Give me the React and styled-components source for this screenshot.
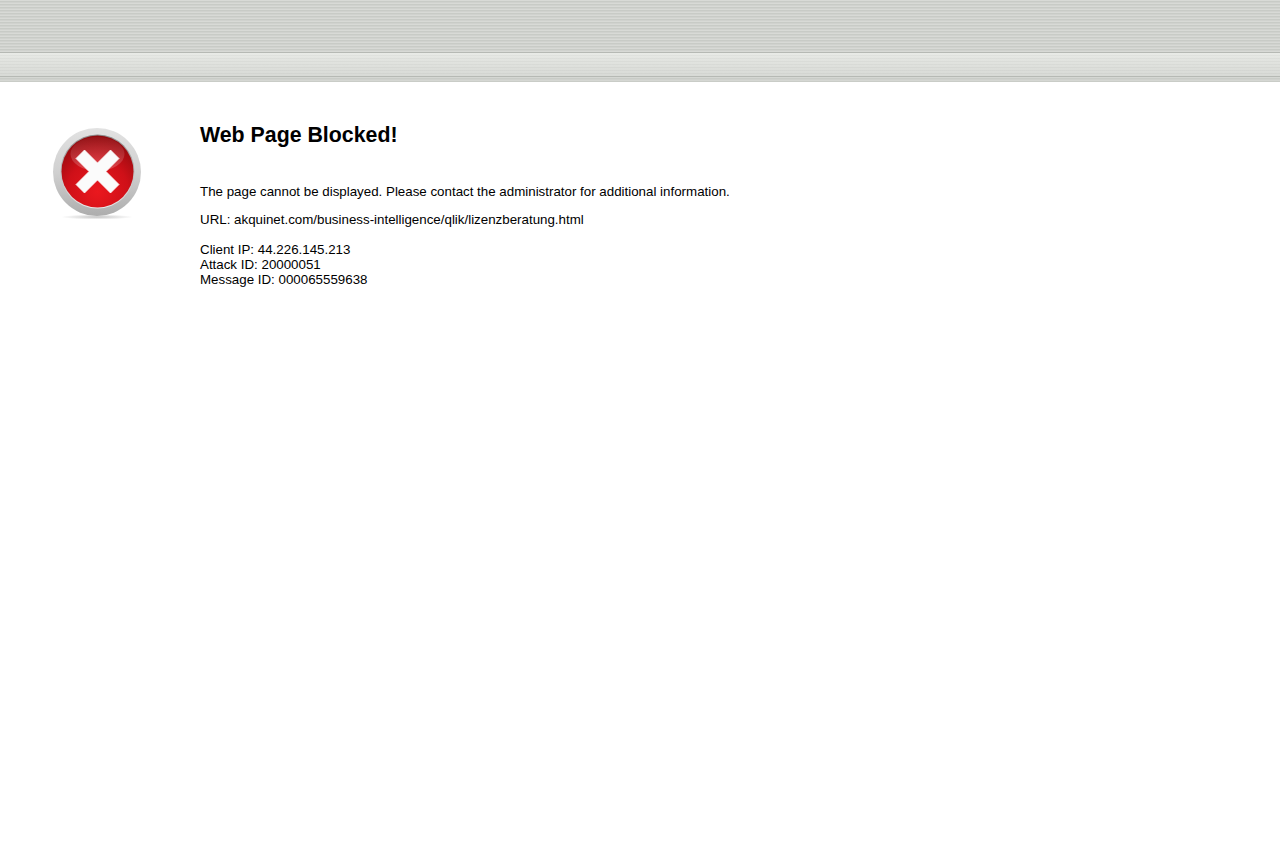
import React from "react";
import styled, { createGlobalStyle } from "styled-components";

const GlobalStyle = createGlobalStyle`
  html, body {
    margin: 0;
    padding: 0;
    background: #fff;
    color: #000;
    font-family: "Liberation Sans", Arial, sans-serif;
  }
`;

const stripes = (dark, mid, light) => `repeating-linear-gradient(
  to bottom,
  ${light} 0,
  ${light} 1px,
  ${dark} 1px,
  ${dark} 2px,
  ${mid} 2px,
  ${mid} 3px
)`;

const TopBand = styled.div`
  height: 52px;
  background-image: ${stripes("#c8cbc6", "#d0d2ce", "#d8dad6")};
  border-bottom: 1px solid #b6b9b4;
`;

const SubBand = styled.div`
  height: 23px;
  background-image:
    repeating-linear-gradient(
      to bottom,
      rgba(0, 0, 0, 0) 0,
      rgba(0, 0, 0, 0) 2px,
      rgba(0, 0, 0, 0.03) 2px,
      rgba(0, 0, 0, 0.03) 3px
    ),
    linear-gradient(to bottom, #e9ebe7 0, #e2e4e0 30%, #d8dad6 100%);
  border-bottom: 1px solid #b6b9b4;
`;

const Lip = styled.div`
  height: 5px;
  background-image: ${stripes("#c9ccc7", "#cfd1cd", "#d5d7d3")};
`;

const Main = styled.div`
  display: flex;
  padding-top: 42px;
`;

const IconColumn = styled.div`
  width: 200px;
  flex: none;
  padding: 3px 0 0 47px;
  box-sizing: border-box;
`;

const Content = styled.div`
  font-size: 13.33px;
  line-height: 15px;
`;

const Title = styled.h1`
  margin: 0 0 37px;
  font-size: 21.33px;
  line-height: 23px;
  font-weight: 700;
`;

const Line = styled.p`
  margin: 0 0 ${(p) => p.$gap || 0}px;
`;

const BlockedIcon = () => (
  <svg width="100" height="100" viewBox="0 0 100 100" style={{ display: "block" }}>
    <defs>
      <linearGradient id="ring" x1="0" y1="0" x2="0" y2="1">
        <stop offset="0" stopColor="#e2e2e2" />
        <stop offset="0.5" stopColor="#d0d0d0" />
        <stop offset="1" stopColor="#adadad" />
      </linearGradient>
      <linearGradient id="rim" x1="0" y1="0" x2="0" y2="1">
        <stop offset="0" stopColor="#8a8a8a" />
        <stop offset="1" stopColor="#e8e8e8" />
      </linearGradient>
      <radialGradient id="red" cx="0.5" cy="0.78" r="0.78">
        <stop offset="0" stopColor="#ea181e" />
        <stop offset="0.55" stopColor="#cf1018" />
        <stop offset="1" stopColor="#8e0a0e" />
      </radialGradient>
      <linearGradient id="gloss" x1="0" y1="0" x2="0" y2="1">
        <stop offset="0" stopColor="#fff" stopOpacity="0.04" />
        <stop offset="1" stopColor="#fff" stopOpacity="0.22" />
      </linearGradient>
      <radialGradient id="floor" cx="0.5" cy="0.5" r="0.5">
        <stop offset="0" stopColor="#aaa" stopOpacity="0.7" />
        <stop offset="1" stopColor="#aaa" stopOpacity="0" />
      </radialGradient>
    </defs>
    <ellipse cx="50" cy="90" rx="36" ry="2.5" fill="url(#floor)" />
    <circle cx="50" cy="45" r="44" fill="url(#ring)" />
    <circle cx="50.5" cy="44.5" r="37" fill="url(#rim)" />
    <circle cx="50.5" cy="44.5" r="36" fill="url(#red)" />
    <ellipse cx="50.5" cy="27" rx="27" ry="17" fill="url(#gloss)" />
    <path
      d="M29 31.5 L37.5 23 L50.5 36 L63.5 23 L72 31.5 L59 44.5 L72 57.5 L63.5 66 L50.5 53 L37.5 66 L29 57.5 L42 44.5 Z"
      fill="#fbfbfb"
      stroke="#fbfbfb"
      strokeWidth="0.8"
    />
  </svg>
);

const App = () => (
  <>
    <GlobalStyle />
    <TopBand />
    <SubBand />
    <Lip />
    <Main>
      <IconColumn>
        <BlockedIcon />
      </IconColumn>
      <Content>
        <Title>Web Page Blocked!</Title>
        <Line $gap={13}>The page cannot be displayed. Please contact the administrator for additional information.</Line>
        <Line $gap={15}>URL: akquinet.com/business-intelligence/qlik/lizenzberatung.html</Line>
        <Line>Client IP: 44.226.145.213</Line>
        <Line>Attack ID: 20000051</Line>
        <Line>Message ID: 000065559638</Line>
      </Content>
    </Main>
  </>
);

export default App;
